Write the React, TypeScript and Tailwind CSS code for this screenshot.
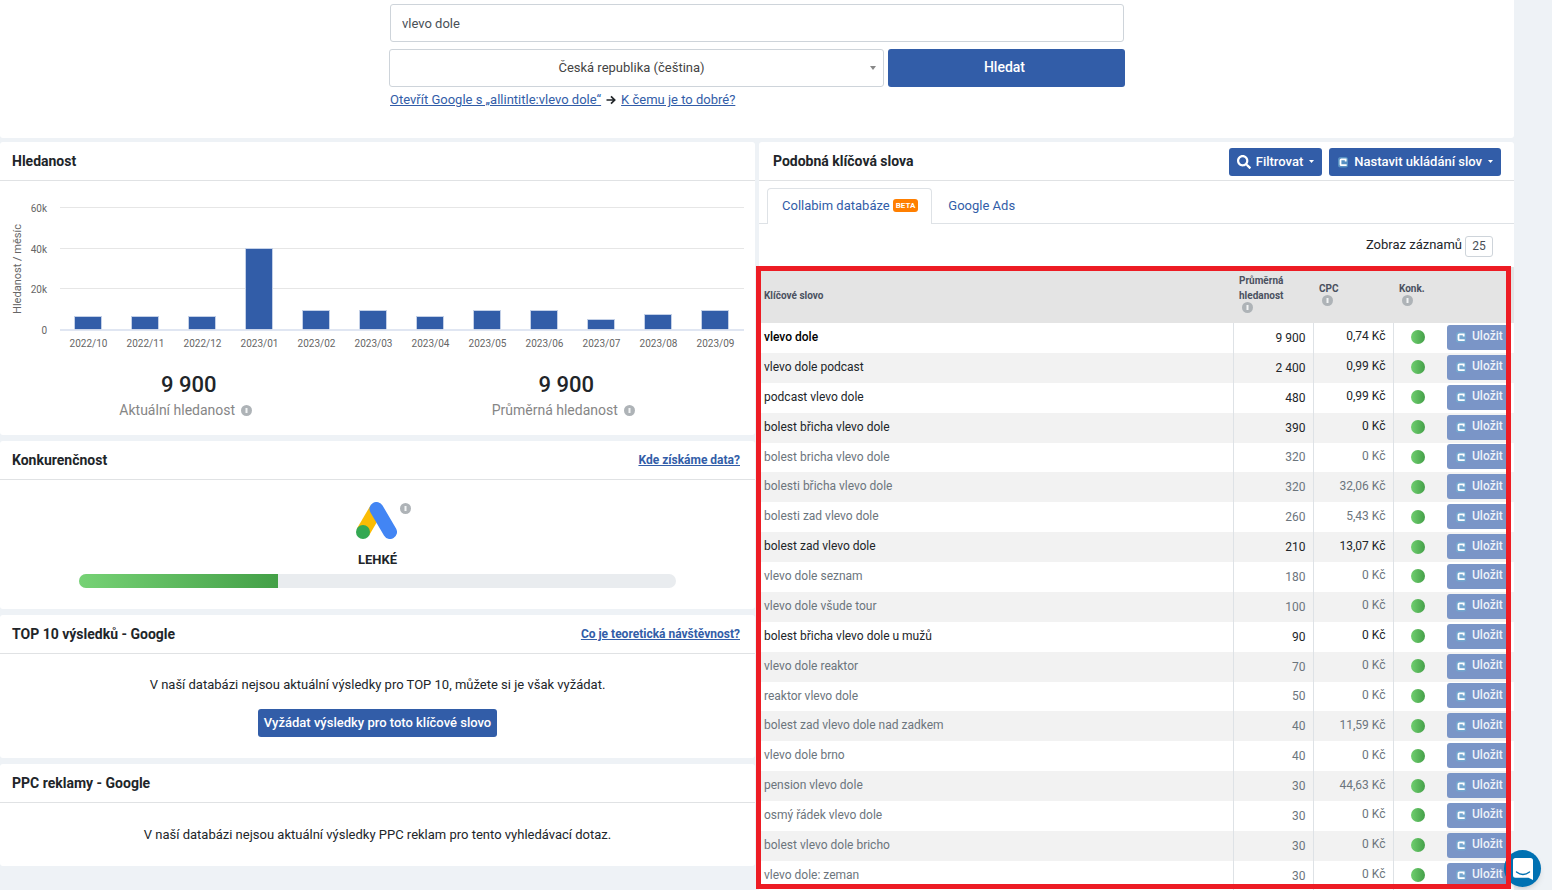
import React from "react";
import { FaSearch } from "react-icons/fa";

type Keyword = { name: string; volume: string; cpc: string; tone: "bold" | "dark" | "muted" };

const keywords: Keyword[] = [
  { name: "vlevo dole", volume: "9 900", cpc: "0,74 Kč", tone: "bold" },
  { name: "vlevo dole podcast", volume: "2 400", cpc: "0,99 Kč", tone: "dark" },
  { name: "podcast vlevo dole", volume: "480", cpc: "0,99 Kč", tone: "dark" },
  { name: "bolest břicha vlevo dole", volume: "390", cpc: "0 Kč", tone: "dark" },
  { name: "bolest bricha vlevo dole", volume: "320", cpc: "0 Kč", tone: "muted" },
  { name: "bolesti břicha vlevo dole", volume: "320", cpc: "32,06 Kč", tone: "muted" },
  { name: "bolesti zad vlevo dole", volume: "260", cpc: "5,43 Kč", tone: "muted" },
  { name: "bolest zad vlevo dole", volume: "210", cpc: "13,07 Kč", tone: "dark" },
  { name: "vlevo dole seznam", volume: "180", cpc: "0 Kč", tone: "muted" },
  { name: "vlevo dole všude tour", volume: "100", cpc: "0 Kč", tone: "muted" },
  { name: "bolest břicha vlevo dole u mužů", volume: "90", cpc: "0 Kč", tone: "dark" },
  { name: "vlevo dole reaktor", volume: "70", cpc: "0 Kč", tone: "muted" },
  { name: "reaktor vlevo dole", volume: "50", cpc: "0 Kč", tone: "muted" },
  { name: "bolest zad vlevo dole nad zadkem", volume: "40", cpc: "11,59 Kč", tone: "muted" },
  { name: "vlevo dole brno", volume: "40", cpc: "0 Kč", tone: "muted" },
  { name: "pension vlevo dole", volume: "30", cpc: "44,63 Kč", tone: "muted" },
  { name: "osmý řádek vlevo dole", volume: "30", cpc: "0 Kč", tone: "muted" },
  { name: "bolest vlevo dole bricho", volume: "30", cpc: "0 Kč", tone: "muted" },
  { name: "vlevo dole: zeman", volume: "30", cpc: "0 Kč", tone: "muted" },
];

const months = [
  { label: "2022/10", height: 13 },
  { label: "2022/11", height: 13 },
  { label: "2022/12", height: 13 },
  { label: "2023/01", height: 81 },
  { label: "2023/02", height: 19 },
  { label: "2023/03", height: 19 },
  { label: "2023/04", height: 13 },
  { label: "2023/05", height: 19 },
  { label: "2023/06", height: 19 },
  { label: "2023/07", height: 10 },
  { label: "2023/08", height: 15 },
  { label: "2023/09", height: 19 },
];

const ticks = [
  { label: "60k", y: 27 },
  { label: "40k", y: 68 },
  { label: "20k", y: 108 },
];

function Info() {
  return (
    <svg className="inline-block size-[11px] shrink-0" viewBox="0 0 11 11" aria-hidden="true">
      <circle cx="5.5" cy="5.5" r="5.5" fill="#aeb3b7" />
      <path d="M4.5 3h2v5h-2z" fill="#f3f4f5" />
    </svg>
  );
}

function Mark() {
  return (
    <svg className="inline-block size-3 shrink-0" viewBox="0 0 12 12" aria-hidden="true">
      <rect x="1" y="1" width="10" height="10.5" rx="2.5" fill="#6fb3d3" opacity=".6" />
      <path d="M8.7 5.4V3.3H4.3Q3.5 3.3 3.5 4.1V8.4Q3.5 9.2 4.3 9.2H9.7" fill="none" stroke="#fff" strokeWidth="1.8" />
    </svg>
  );
}

function Caret() {
  return (
    <svg className="ml-px h-[3px] w-[5px]" viewBox="0 0 5 3" aria-hidden="true">
      <path d="M0 0h5L2.5 3z" fill="#fff" />
    </svg>
  );
}

function Card({ title, link, children }: { title: string; link?: string; children: React.ReactNode }) {
  return (
    <section className="rounded-[3px] bg-white">
      <header className="flex h-[39px] items-center justify-between border-b border-[#e0e2e4] pr-[15px] pl-3">
        <h2 className="text-[14px] leading-5 font-bold">{title}</h2>
        {link && (
          <a href="#" className="text-[12px] leading-5 font-bold text-[#325da8] underline">
            {link}
          </a>
        )}
      </header>
      {children}
    </section>
  );
}

function Chart() {
  return (
    <svg className="block w-full" viewBox="0 0 755 176" role="img" aria-label="Hledanost / měsíc">
      {ticks.map((t) => (
        <g key={t.label}>
          <rect x="60" y={t.y - 1} width="684" height="1" fill="#e6e6e6" />
          <text x="47" y={t.y + 4} textAnchor="end" fontSize="10" fill="#666">
            {t.label}
          </text>
        </g>
      ))}
      <text x="47" y="153" textAnchor="end" fontSize="10" fill="#666">
        0
      </text>
      {months.map((m, i) => (
        <g key={m.label}>
          <rect x={74 + i * 57} y={148 - m.height} width="28" height={m.height + 1} fill="#c3d0e7" />
          <rect x={75 + i * 57} y={149 - m.height} width="26" height={m.height} fill="#325da8" />
          <text x={88.5 + i * 57} y="166" textAnchor="middle" fontSize="10" fill="#666">
            {m.label}
          </text>
        </g>
      ))}
      <rect x="60" y="148" width="684" height="2" fill="#dde3f1" opacity=".9" />
      <text transform="translate(21 88) rotate(-90)" textAnchor="middle" fontSize="11" fill="#666">
        Hledanost / měsíc
      </text>
    </svg>
  );
}

function Stat({ value, label }: { value: string; label: string }) {
  return (
    <div className="text-center">
      <div className="text-[22px] leading-[27px] font-medium">{value}</div>
      <div className="flex items-center justify-center gap-1.5 pr-1.5 text-[14px] leading-6 text-[#868686]">
        {label}
        <Info />
      </div>
    </div>
  );
}

function AdsLogo() {
  return (
    <svg className="h-[37px] w-[41px]" viewBox="0 0 41 37" aria-hidden="true">
      <path d="M20.5 7L7 30" stroke="#fbbc04" strokeWidth="14" />
      <path d="M20.5 7L34 30" stroke="#4285f4" strokeWidth="14" strokeLinecap="round" />
      <circle cx="7" cy="30" r="7" fill="#34a853" />
    </svg>
  );
}

const toneClass = {
  bold: "font-medium text-black",
  dark: "text-[#212529]",
  muted: "text-[#6c757d]",
};

function KeywordTable() {
  const th = "align-middle text-left text-[10px] leading-[15px] font-bold text-[#4a5160]";
  return (
    <table className="w-full table-fixed border-collapse">
      <colgroup>
        <col />
        <col className="w-20" />
        <col className="w-20" />
        <col className="w-12" />
        <col className="w-[73px]" />
      </colgroup>
      <thead>
        <tr className="h-14 bg-[#e4e4e4]">
          <th className={th + " pl-[5px]"}>Klíčové slovo</th>
          <th className={th + " pb-[5px] pl-1.5"}>
            Průměrná hledanost
            <span className="flex h-[9px] items-center pl-[3px]"><Info /></span>
          </th>
          <th className={th + " pb-[5px] pl-1.5"}>
            CPC
            <span className="flex h-[9px] items-center pl-[3px]"><Info /></span>
          </th>
          <th className={th + " pb-[5px] pl-1.5"}>
            Konk.
            <span className="flex h-[9px] items-center pl-[3px]"><Info /></span>
          </th>
          <th aria-label="Akce" />
        </tr>
      </thead>
      <tbody>
        {keywords.map((k) => (
          <tr key={k.name} className="bg-white text-[12px] leading-4 even:bg-[#f2f2f2]">
            <td className={"pt-[5px] pb-[7px] pl-[5px] text-[13px] leading-snug " + toneClass[k.tone]}>
              <span className="text-[12px] leading-none">{k.name}</span>
            </td>
            <td className={"border-l border-[#dee2e6] pr-[7px] text-right " + (k.tone === "muted" ? "text-[#6c757d]" : "text-[#212529]")}>
              {k.volume}
            </td>
            <td className={"border-x border-[#dee2e6] pr-[7px] pb-[3px] text-right " + (k.tone === "muted" ? "text-[#6c757d]" : "text-[#212529]")}>
              {k.cpc}
            </td>
            <td className="pb-px pl-px">
              <span className="mx-auto block size-3.5 rounded-full bg-linear-to-r from-[#6fcf6f] to-[#45a049]" />
            </td>
            <td className="pr-[5px] pb-px pl-1.5">
              <button
                type="button"
                className="flex h-[25px] w-full items-center gap-[5px] rounded-[3px] bg-[#7a95c7] pl-2 text-[12px] leading-4 font-medium text-[#eef2f9]"
              >
                <Mark />
                <span className="pb-0.5">Uložit</span>
              </button>
            </td>
          </tr>
        ))}
      </tbody>
    </table>
  );
}

export default function App() {
  const primary = "rounded-[3px] bg-[#325da8] font-medium text-white";
  return (
    <div className="h-screen overflow-hidden bg-[#eef2f6] pr-[38px] font-[Roboto,sans-serif] text-[13px] text-[#212529]">
      <form className="h-[138px] rounded-b-[3px] bg-white pt-1" onSubmit={(e) => e.preventDefault()}>
        <div className="mx-auto max-w-[736px]">
          <div className="px-px">
            <input
              aria-label="Klíčové slovo"
              defaultValue="vlevo dole"
              className="block h-[38px] w-full rounded-[3px] border border-[#ced4da] px-[11px] text-[#495057]"
            />
          </div>
          <div className="mt-[7px] flex gap-1">
            <div className="relative flex-1">
              <select
                aria-label="Země a jazyk"
                className="block h-[38px] w-full appearance-none rounded-[3px] border border-[#ced4da] bg-white pr-3.5 pl-1 text-center text-[#444]"
              >
                <option>Česká republika (čeština)</option>
              </select>
              <svg className="pointer-events-none absolute top-[17px] right-2 h-1 w-1.5" viewBox="0 0 6 4" aria-hidden="true">
                <path d="M0 0h6L3 4z" fill="#888" />
              </svg>
            </div>
            <button type="submit" className={primary + " h-[38px] w-[237px] pr-1 pb-0.5 text-[14px]"}>
              Hledat
            </button>
          </div>
          <p className="mt-1 flex items-center gap-[5px] px-px leading-[18px]">
            <a href="#" className="text-[#325da8] underline">Otevřít Google s „allintitle:vlevo dole“</a>
            <svg className="h-2.5 w-[10px]" viewBox="0 0 10 10" aria-hidden="true">
              <path d="M0.5 5h8M5 1.3L8.7 5L5 8.7" fill="none" stroke="#212529" strokeWidth="1.7" />
            </svg>
            <a href="#" className="text-[#325da8] underline">K čemu je to dobré?</a>
          </p>
        </div>
      </form>

      <main className="mt-1 grid grid-cols-2 items-start gap-1">
        <div className="flex flex-col gap-1.5">
          <Card title="Hledanost">
            <Chart />
            <div className="grid grid-cols-2 pt-3.5 pb-[13px]">
              <Stat value="9 900" label="Aktuální hledanost" />
              <Stat value="9 900" label="Průměrná hledanost" />
            </div>
          </Card>

          <Card title="Konkurenčnost" link="Kde získáme data?">
            <div className="flex flex-col items-center pt-[22px] pb-[21px]">
              <div className="flex items-start gap-[3px] pl-3">
                <AdsLogo />
                <span className="flex pt-px"><Info /></span>
              </div>
              <div className="mt-[13px] text-[13px] leading-4 font-bold">LEHKÉ</div>
              <div className="mt-1.5 h-3.5 w-[79%] overflow-hidden rounded-full bg-[#e9ecef]">
                <div className="h-full w-1/3 bg-linear-to-r from-[#76d275] to-[#43a047]" />
              </div>
            </div>
          </Card>

          <Card title="TOP 10 výsledků - Google" link="Co je teoretická návštěvnost?">
            <div className="flex flex-col items-center gap-3.5 pt-[21px] pb-[21px]">
              <p className="leading-5">V naší databázi nejsou aktuální výsledky pro TOP 10, můžete si je však vyžádat.</p>
              <button type="button" className={primary + " h-7 px-1.5"}>
                Vyžádat výsledky pro toto klíčové slovo
              </button>
            </div>
          </Card>

          <Card title="PPC reklamy - Google">
            <p className="pt-[22px] pb-[21px] text-center leading-5">
              V naší databázi nejsou aktuální výsledky PPC reklam pro tento vyhledávací dotaz.
            </p>
          </Card>
        </div>

        <section className="rounded-[3px] bg-white">
          <header className="flex h-[39px] items-center gap-[7px] border-b border-[#e0e2e4] pr-[13px] pl-3.5">
            <h2 className="mr-auto text-[14px] leading-5 font-bold">Podobná klíčová slova</h2>
            <button type="button" className={primary + " mt-px flex h-7 items-center gap-[5px] px-2"}>
              <FaSearch className="size-3.5" />
              Filtrovat
              <Caret />
            </button>
            <button type="button" className={primary + " mt-px flex h-7 items-center gap-[5px] px-2"}>
              <Mark />
              Nastavit ukládání slov
              <Caret />
            </button>
          </header>
          <nav className="flex h-[43px] items-end border-b border-[#dee2e6] pl-2">
            <a href="#" className="-mb-px flex h-9 items-center gap-[3px] rounded-t-[4px] border border-b-0 border-[#dee2e6] bg-white pr-[13px] pb-0.5 pl-3.5 text-[#325da8]">
              Collabim databáze
              <span className="rounded-[3px] bg-[#ff7f00] px-[3px] text-[8px] leading-[13px] font-bold text-white">BETA</span>
            </a>
            <a href="#" className="flex h-[35px] items-center px-4 text-[#325da8]">Google Ads</a>
          </nav>
          <div className="flex h-[43px] items-center justify-end gap-[3px] pt-px pr-[21px]">
            <label htmlFor="page-size" className="pb-0.5">Zobraz záznamů</label>
            <input
              id="page-size"
              defaultValue="25"
              className="h-[21px] w-7 rounded-[3px] border border-[#ced4da] text-center text-[12px] text-[#495057]"
            />
          </div>
          <div className="relative">
            <KeywordTable />
            <div className="pointer-events-none absolute -top-px right-[3px] bottom-[2px] -left-[3px] z-20 border-5 border-[#ed1c24]" />
          </div>
        </section>
      </main>

      <button
        type="button"
        aria-label="Chat"
        className="fixed right-[11px] bottom-[3px] z-10 flex size-[37px] items-center justify-center rounded-full bg-[#0071b2] shadow-md"
      >
        <svg className="h-[22px] w-5" viewBox="0 0 20 22" aria-hidden="true">
          <path d="M2.5 0h15Q20 0 20 2.5V22l-4.5-2.2h-13Q0 19.8 0 17.3V2.5Q0 0 2.5 0z" fill="#fff" />
          <path d="M3.5 14Q10 19 16.5 14" fill="none" stroke="#0071b2" strokeWidth="1.4" strokeLinecap="round" />
        </svg>
      </button>
    </div>
  );
}
